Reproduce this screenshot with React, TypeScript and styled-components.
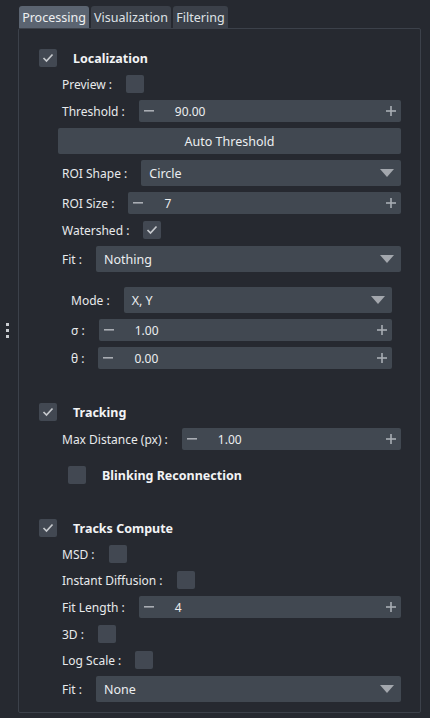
import React from 'react';
import styled, {createGlobalStyle} from 'styled-components';

const GlobalStyle = createGlobalStyle`
  html, body {
    margin: 0;
    padding: 0;
    background: #262930;
  }
  body {
    font-family: "Noto Sans", "Open Sans", sans-serif;
    font-size: 12px;
    color: #e4e6e8;
  }
`

const Page = styled.div`
  display: flex;
  width: 430px;
  height: 718px;
  box-sizing: border-box;
  padding-top: 6px;
`

const Handle = styled.div`
  width: 18px;
  display: flex;
  flex-direction: column;
  align-items: flex-start;
  justify-content: center;
  gap: 3px;
  padding-left: 6px;
  box-sizing: border-box;
  padding-bottom: 64px;
`

const Dot = styled.span`
  display: block;
  width: 3px;
  height: 3px;
  background: #c9ccd0;
`

const Main = styled.div`
  display: flex;
  flex-direction: column;
  width: 403px;
`

const TabBar = styled.div`
  display: flex;
  gap: 2px;
  padding-left: 1px;
  height: 22px;
`

const Tab = styled.div<{ $active?: boolean; $width: number }>`
  display: flex;
  align-items: center;
  justify-content: center;
  width: ${p => p.$width}px;
  background: ${p => p.$active ? '#5b6471' : '#3b4049'};
  color: ${p => p.$active ? '#eef0f2' : '#dfe2e6'};
  border-radius: 3px 3px 0 0;
  font-size: 12.5px;
`

const Frame = styled.div`
  height: 685px;
  box-sizing: border-box;
  border: 1px solid #3c414a;
  border-radius: 2px;
  padding: 20px 19px 0 20px;
  display: flex;
  flex-direction: column;
`

const Header = styled.div<{ $top?: number; $indent?: number }>`
  display: flex;
  align-items: center;
  gap: 16px;
  height: 18px;
  margin-top: ${p => p.$top ?? 0}px;
  padding-left: ${p => p.$indent ?? 0}px;
`

const Title = styled.span`
  font-weight: 700;
  font-size: 12.5px;
  color: #f2f3f5;
`

const Row = styled.div<{ $top?: number; $h?: number; $indent?: number }>`
  display: flex;
  align-items: center;
  gap: 14px;
  height: ${p => p.$h ?? 22}px;
  margin-top: ${p => p.$top ?? 0}px;
  margin-left: ${p => 23 + (p.$indent ?? 0)}px;
  margin-right: ${p => p.$indent ?? 0}px;
`

const Label = styled.span`
  white-space: nowrap;
  color: #e8eaec;
`

const Box = styled.div`
  width: 18px;
  height: 18px;
  flex: none;
  background: #424852;
  border-radius: 2px;
  display: flex;
  align-items: center;
  justify-content: center;
`

const Spin = styled.div`
  flex: 1;
  height: 22px;
  background: #414851;
  border-radius: 2px;
  display: flex;
  align-items: center;
  padding: 0 5px;
  box-sizing: border-box;
  color: #eceef0;
`

const SpinValue = styled.span`
  flex: 1;
  padding-left: 21px;
`

const Combo = styled.div`
  flex: 1;
  height: 26px;
  background: #414851;
  border-radius: 2px;
  display: flex;
  align-items: center;
  justify-content: space-between;
  padding: 0 7px 0 8px;
  box-sizing: border-box;
  color: #eceef0;
  font-size: 12.5px;
`

const Button = styled.div<{ $top?: number }>`
  margin: ${p => p.$top ?? 0}px 0 0 19px;
  height: 26px;
  background: #414851;
  border-radius: 2px;
  display: flex;
  align-items: center;
  justify-content: center;
  color: #eceef0;
  font-size: 12.5px;
`

const Check = () => (
  <svg width="12" height="10" viewBox="0 0 12 10">
    <polyline points="1.5,5 4.5,8 10.5,1.5" fill="none" stroke="#c6c9cd" strokeWidth="1.7"/>
  </svg>
)

const Minus = () => (
  <svg width="10" height="10" viewBox="0 0 10 10">
    <rect x="0" y="4" width="10" height="1.6" fill="#a9adb3"/>
  </svg>
)

const Plus = () => (
  <svg width="10" height="10" viewBox="0 0 10 10">
    <rect x="0" y="4.2" width="10" height="1.6" fill="#a9adb3"/>
    <rect x="4.2" y="0" width="1.6" height="10" fill="#a9adb3"/>
  </svg>
)

const Arrow = () => (
  <svg width="14" height="8" viewBox="0 0 14 8">
    <polygon points="0,0 14,0 7,8" fill="#a3a7ad"/>
  </svg>
)

const CheckBox = ({checked}: { checked?: boolean }) => (
  <Box>{checked && <Check/>}</Box>
)

const SpinBox = ({value}: { value: string }) => (
  <Spin>
    <Minus/>
    <SpinValue>{value}</SpinValue>
    <Plus/>
  </Spin>
)

const ComboBox = ({value}: { value: string }) => (
  <Combo>
    <span>{value}</span>
    <Arrow/>
  </Combo>
)

const App = () => {
  return (
    <>
      <GlobalStyle/>
      <Page>
        <Handle>
          <Dot/><Dot/><Dot/>
        </Handle>
        <Main>
          <TabBar>
            <Tab $active $width={70}>Processing</Tab>
            <Tab $width={80}>Visualization</Tab>
            <Tab $width={55}>Filtering</Tab>
          </TabBar>
          <Frame>
            <Header>
              <CheckBox checked/>
              <Title>Localization</Title>
            </Header>
            <Row $top={8} $h={18}>
              <Label>Preview :</Label>
              <CheckBox/>
            </Row>
            <Row $top={7}>
              <Label>Threshold :</Label>
              <SpinBox value="90.00"/>
            </Row>
            <Button $top={6}>Auto Threshold</Button>
            <Row $top={6} $h={26}>
              <Label>ROI Shape :</Label>
              <ComboBox value="Circle"/>
            </Row>
            <Row $top={6}>
              <Label>ROI Size :</Label>
              <SpinBox value="7"/>
            </Row>
            <Row $top={7} $h={18}>
              <Label>Watershed :</Label>
              <CheckBox checked/>
            </Row>
            <Row $top={7} $h={26}>
              <Label>Fit :</Label>
              <ComboBox value="Nothing"/>
            </Row>
            <Row $top={15} $h={26} $indent={9}>
              <Label>Mode :</Label>
              <ComboBox value="X, Y"/>
            </Row>
            <Row $top={6} $indent={9}>
              <Label>σ :</Label>
              <SpinBox value="1.00"/>
            </Row>
            <Row $top={6} $indent={9}>
              <Label>θ :</Label>
              <SpinBox value="0.00"/>
            </Row>

            <Header $top={34}>
              <CheckBox checked/>
              <Title>Tracking</Title>
            </Header>
            <Row $top={7}>
              <Label>Max Distance (px) :</Label>
              <SpinBox value="1.00"/>
            </Row>
            <Header $top={16} $indent={29}>
              <CheckBox/>
              <Title>Blinking Reconnection</Title>
            </Header>

            <Header $top={35}>
              <CheckBox checked/>
              <Title>Tracks Compute</Title>
            </Header>
            <Row $top={8} $h={18}>
              <Label>MSD :</Label>
              <CheckBox/>
            </Row>
            <Row $top={8} $h={18}>
              <Label>Instant Diffusion :</Label>
              <CheckBox/>
            </Row>
            <Row $top={7}>
              <Label>Fit Length :</Label>
              <SpinBox value="4"/>
            </Row>
            <Row $top={7} $h={18}>
              <Label>3D :</Label>
              <CheckBox/>
            </Row>
            <Row $top={8} $h={18}>
              <Label>Log Scale :</Label>
              <CheckBox/>
            </Row>
            <Row $top={7} $h={26}>
              <Label>Fit :</Label>
              <ComboBox value="None"/>
            </Row>
          </Frame>
        </Main>
      </Page>
    </>
  );
}

export default App;
